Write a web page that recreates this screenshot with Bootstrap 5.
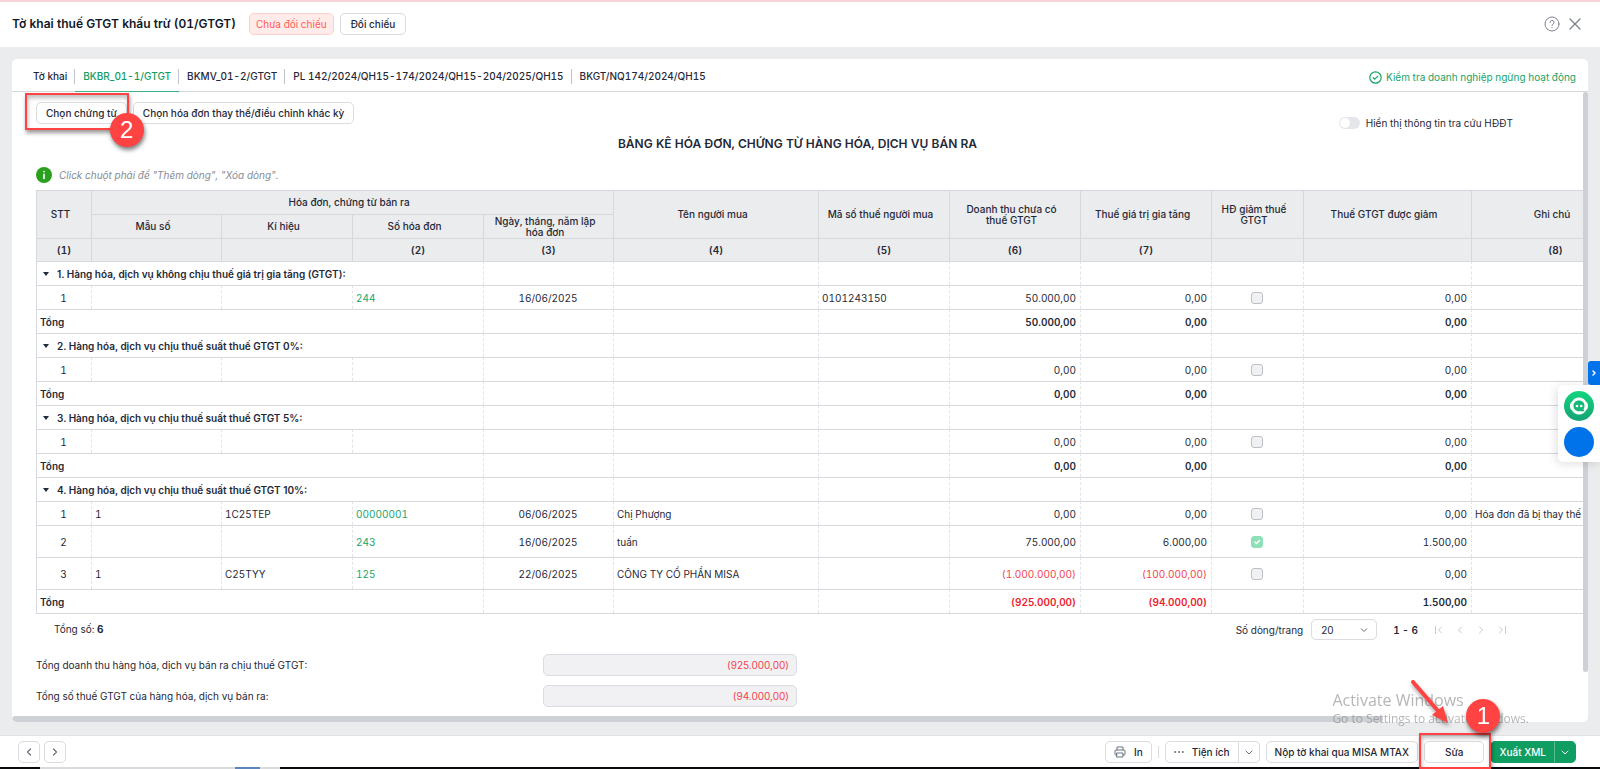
<!DOCTYPE html>
<html lang="vi">
<head>
<meta charset="utf-8">
<meta name="viewport" content="width=device-width, initial-scale=1">
<title>Tờ khai thuế GTGT khấu trừ (01/GTGT)</title>
<link rel="stylesheet" href="https://cdn.jsdelivr.net/npm/bootstrap@5.3.0/dist/css/bootstrap.min.css">
<style>
  :root { --ink: #1f2937; --line: #d5d8dc; --surface: #ebecee; --brand: #0f9d62; --mark-red: #ff4343; }
  body { font-family: Inter, "Noto Sans", sans-serif; font-size: 10px; line-height: 16px; font-variant-numeric: tabular-nums; color: var(--ink); background: var(--surface); }
  svg { display: block; fill: none; stroke: currentColor; stroke-linecap: round; stroke-linejoin: round; flex: none; }
  a { text-decoration: none; }

  .app-header { border-top: 2px solid #f5d3d8; height: 47px; padding: 0 18px 1px 12px; }
  .app-title { font-size: 12px; line-height: 20px; font-weight: 600; color: #111827; margin: 0 13px 0 0; }
  .btn-app { --bs-btn-font-size: 10px; --bs-btn-line-height: 16px; --bs-btn-padding-y: 2px; --bs-btn-padding-x: 9px;
    --bs-btn-border-radius: 5px; --bs-btn-font-weight: 500; --bs-btn-color: var(--ink); --bs-btn-bg: #fff;
    --bs-btn-border-color: #d9dce0; --bs-btn-hover-bg: #f5f6f7; --bs-btn-hover-border-color: #c8ccd2; white-space: nowrap; }
  .btn-wide { --bs-btn-padding-x: 10px; }
  .btn-brand { --bs-btn-color: #fff; --bs-btn-bg: var(--brand); --bs-btn-border-color: var(--brand);
    --bs-btn-hover-color: #fff; --bs-btn-hover-bg: #0c8a55; --bs-btn-hover-border-color: #0c8a55; }
  .btn-brand + .btn-brand { border-left-color: #5bbd93; }
  .btn-square { --bs-btn-padding-x: 0; width: 22px; height: 22px; color: #6b7280; }
  .btn-plain { border: 0; background: none; padding: 0; color: #7b818c; }
  .state-tag { line-height: 16px; padding: 2px 6px; margin-right: 6px; color: #ff5c52; background: #ffecea; border: 1px solid #fdcfcb; border-radius: 5px; }

  .workspace { padding: 12px 12px 13px; }
  .sheet { background: #fff; border-radius: 5px; overflow: hidden; }
  .tab-bar { height: 33px; border-bottom: 1px solid var(--line); padding: 0 12px 0 13px; }
  .tab-bar .nav-link { padding: 0 8px; height: 33px; line-height: 34px; font-weight: 500; color: var(--ink); position: relative; }
  .tab-bar .nav-link.active { color: var(--brand); box-shadow: inset 0 -1px 0 #3cb487; }
  .tab-bar .nav-item + .nav-item .nav-link::before { content: ""; position: absolute; left: -1px; top: 10px; width: 1px; height: 15px; background: #bfc4cb; }
  .check-link { color: #18a369; padding-top: 10px; }

  .sheet-body { padding: 0 0 9px 24px; min-width: 0; overflow: hidden; }
  .toolbar { height: 40px; padding-top: 10px; gap: 6px; }
  .lookup { margin: 12px 70px 0 0; gap: 6px; line-height: 18px; }
  .lookup .form-check-input { width: 21px; height: 12px; margin: 0; border: 0; background-color: #e4e6e9;
    background-image: url("data:image/svg+xml,%3csvg xmlns='http://www.w3.org/2000/svg' viewBox='-4 -4 8 8'%3e%3ccircle r='3.3' fill='%23fff'/%3e%3c/svg%3e"); }
  .form-title { font-size: 12px; line-height: 24px; font-weight: 600; }
  .hint { height: 18px; margin: 10px 0 6px; gap: 7px; color: #868b94; font-style: italic; }

  .grid-view { overflow: hidden; }
  .ledger { width: 1603px; table-layout: fixed; border-collapse: separate; border-spacing: 0; border-bottom: 1px solid var(--line); }
  .ledger th, .ledger td { height: 24px; padding: 0 4px 0 3px; border: 0 solid var(--line); border-top-width: 1px; border-left-width: 1px;
    line-height: 16px; white-space: nowrap; overflow: hidden; vertical-align: middle; }
  .ledger thead th { background: var(--surface); font-weight: 500; text-align: center; white-space: normal; line-height: 11px; padding: 0 8px 0 1px; }
  .ledger thead .col-index th { height: 23px; padding: 0; font-weight: 600; }
  .ledger tbody td, .ledger tbody th { border-left-style: dashed; border-left-color: #e2e4e7; }
  .ledger tbody tr > :first-child { border-left: 1px solid var(--line); }
  .ledger .group-row th, .ledger .sum-row th, .ledger .sum-row td { font-weight: 600; }
  .ledger .tall-row td { height: 32px; }
  .ledger .group-row button { border: 0; background: none; padding: 0; font-weight: 600; color: inherit; gap: 7px; margin-left: 2px; }
  .ledger .form-check-input { width: 12px; height: 12px; margin: 0; border-radius: 3px; vertical-align: -2px; border-color: #bcc0c5; background-color: #f0f1f2; opacity: 1; }
  .ledger .form-check-input:checked { background-color: #8fe0b8; border-color: #8fe0b8; }
  .ledger a { color: #1aa56c; }
  .minus { color: #f04450; }
  .sum-row .minus { color: #ee1c2b; }

  .pager { padding: 5px 76px 0 18px; height: 40px; }
  .pager-count { padding-top: 2px; }
  .page-size { width: 66px; height: 21px; font-size: 10px; line-height: 16px; padding: 1px 24px 1px 9px; border-radius: 5px; border-color: #d9dce0; color: var(--ink);
    background-image: url("data:image/svg+xml,%3csvg xmlns='http://www.w3.org/2000/svg' viewBox='0 0 10 10'%3e%3cpath d='M2 3.5l3 3 3-3' fill='none' stroke='%236b7280'/%3e%3c/svg%3e"); background-size: 10px 10px; background-position: right 7px center; }
  .pager-icons { color: #c6c9ce; gap: 11px; }
  .pager-icons button { color: inherit; }
  .sum-field { gap: 8px; margin-bottom: 9px; }
  .sum-field:last-child { margin-bottom: 0; }
  .sum-field label { width: 499px; }
  .sum-field .form-control { width: 254px; height: 22px; padding: 0 7px; font-size: 10px; line-height: 16px; text-align: right; border-radius: 5px; border-color: #d9dce0; background: #f1f1f3; color: #f04450; }
  .track-y { width: 5px; flex: none; }
  .track-x { height: 6px; }
  .thumb { background: #cdd0d4; border-radius: 3px; }

  .app-footer { background: #fff; border-top: 1px solid #e0e2e4; height: 32px; padding: 0 24px 0 18px; }
  .action-bar { gap: 6px; }
  .action-bar .btn-app:not(.btn-square) { --bs-btn-padding-x: 8px; }
  .rule-y { width: 1px; height: 12px; background: #d9dce0; }
  .desk-strip { height: 2px; background: linear-gradient(90deg, #0a0a0c 40px, #d9dadc 40px 235px, #5b86bd 235px 260px, #d9dadc 260px 280px, #0a0a0c 280px); }
  .icon-muted { color: #6b7280; }
  .icon-dots { fill: currentColor; stroke: none; }

  /* numbered guide marks */
  .mark-box { position: absolute; border: 2px solid var(--mark-red); box-shadow: 1px 3px 4px rgba(0,0,0,.4), inset 1px 3px 4px rgba(0,0,0,.25); pointer-events: none; z-index: 3; }
  .mark-dot { position: absolute; width: 34px; height: 34px; border-radius: 50%; background: var(--mark-red); color: #fff; font: 24px/34px "Liberation Sans", sans-serif; text-align: center; box-shadow: 1px 3px 4px rgba(0,0,0,.5); z-index: 4; }
  .mark-pick { inset: -9px -2px -6px -11px; }
  .dot-pick { right: -17px; top: 11px; }
  .mark-edit { inset: -8px -7px -6px -5px; }
  .dot-edit { right: -16px; bottom: 30px; }
  .arrow-edit { position: absolute; right: 34px; bottom: 38px; z-index: 4; filter: drop-shadow(1px 3px 2px rgba(0,0,0,.4)); }

  .os-note { position: fixed; right: 71px; bottom: 41px; color: rgba(120,122,126,.55); font-family: "Open Sans", sans-serif; pointer-events: none; white-space: nowrap; }
  .os-note p { margin: 0; font-size: 12px; line-height: 18px; }
  .os-note .os-note-title { font-size: 16px; line-height: 20px; }
  .side-dock { position: fixed; right: 0; top: 361px; z-index: 5; }
  .dock-toggle { width: 12px; height: 24px; border: 0; padding: 0; background: #0073ea; color: #fff; border-radius: 3px 0 0 3px; }
  .dock-panel { background: #fff; border-radius: 5px 0 0 5px; padding: 6px 6px 5px; gap: 6px; box-shadow: -2px 2px 10px rgba(0,0,0,.12); }
  .dock-panel button { width: 30px; height: 30px; border: 0; padding: 0; border-radius: 50%; }
  .dock-chat { background: linear-gradient(#12d67d, #14a373); }
  .dock-chat svg { stroke: none; }
  .dock-blue { background: #0073ea; }
</style>
</head>
<body>
<div class="min-vh-100 d-flex flex-column">

  <header class="app-header bg-white d-flex align-items-center">
    <h1 class="app-title">Tờ khai thuế GTGT khấu trừ (01/GTGT)</h1>
    <span class="state-tag">Chưa đối chiếu</span>
    <button type="button" class="btn btn-app btn-wide">Đối chiếu</button>
    <button type="button" class="btn-plain ms-auto me-2" aria-label="Trợ giúp">
      <svg width="16" height="16" viewBox="0 0 16 16"><circle cx="8" cy="8" r="7"/><path d="M6 6.4a2 2 0 1 1 2.9 1.8c-.6.3-.9.7-.9 1.3M8 11.6v.1"/></svg>
    </button>
    <button type="button" class="btn-plain" aria-label="Đóng">
      <svg width="14" height="14" viewBox="0 0 14 14" stroke-width="1.3"><path d="M2 2l10 10M12 2L2 12"/></svg>
    </button>
  </header>

  <main class="workspace flex-grow-1">
    <section class="sheet">
      <div class="tab-bar d-flex justify-content-between align-items-start">
        <ul class="nav flex-nowrap">
          <li class="nav-item"><a class="nav-link" href="#">Tờ khai</a></li>
          <li class="nav-item"><a class="nav-link active" aria-current="page" href="#">BKBR_01-1/GTGT</a></li>
          <li class="nav-item"><a class="nav-link" href="#">BKMV_01-2/GTGT</a></li>
          <li class="nav-item"><a class="nav-link" href="#">PL 142/2024/QH15-174/2024/QH15-204/2025/QH15</a></li>
          <li class="nav-item"><a class="nav-link" href="#">BKGT/NQ174/2024/QH15</a></li>
        </ul>
        <a class="check-link d-flex align-items-center gap-1" href="#">
          <svg width="13" height="13" viewBox="0 0 13 13" stroke-width="1.2"><circle cx="6.5" cy="6.5" r="5.7"/><path d="M4.2 6.7l1.6 1.5 3-3.1"/></svg>
          Kiểm tra doanh nghiệp ngừng hoạt động
        </a>
      </div>

      <div class="d-flex">
        <div class="sheet-body flex-grow-1">
          <div class="toolbar d-flex align-items-start">
            <div class="position-relative">
              <button type="button" class="btn btn-app">Chọn chứng từ</button>
              <span class="mark-box mark-pick"></span>
              <span class="mark-dot dot-pick">2</span>
            </div>
            <button type="button" class="btn btn-app">Chọn hóa đơn thay thế/điều chỉnh khác kỳ</button>
            <div class="lookup form-switch d-flex align-items-center ms-auto p-0">
              <input class="form-check-input" type="checkbox" role="switch" id="lookup">
              <label for="lookup">Hiển thị thông tin tra cứu HĐĐT</label>
            </div>
          </div>
          <h2 class="form-title text-center mb-0 pe-4">BẢNG KÊ HÓA ĐƠN, CHỨNG TỪ HÀNG HÓA, DỊCH VỤ BÁN RA</h2>
          <div class="hint d-flex align-items-center">
            <svg width="16" height="16" viewBox="0 0 16 16"><circle cx="8" cy="8" r="8" fill="#2ba01f" stroke="none"/><path d="M8 7.4v4M8 4.6v.1" stroke="#fff" stroke-width="1.6"/></svg>
            Click chuột phải để "Thêm dòng", "Xóa dòng".
          </div>

          <div class="grid-view">
            <table class="ledger">
              <colgroup>
                <col style="width:55px"><col style="width:130px"><col style="width:131px"><col style="width:131px"><col style="width:130px"><col style="width:205px"><col style="width:131px"><col style="width:131px"><col style="width:131px"><col style="width:92px"><col style="width:168px"><col style="width:168px">
              </colgroup>
              <thead>
                <tr><th rowspan="2">STT</th><th colspan="4">Hóa đơn, chứng từ bán ra</th><th rowspan="2">Tên người mua</th><th rowspan="2">Mã số thuế người mua</th><th rowspan="2">Doanh thu chưa có<br>thuế GTGT</th><th rowspan="2">Thuế giá trị gia tăng</th><th rowspan="2">HĐ giảm thuế<br>GTGT</th><th rowspan="2">Thuế GTGT được giảm</th><th rowspan="2">Ghi chú</th></tr>
                <tr><th>Mẫu số</th><th>Kí hiệu</th><th>Số hóa đơn</th><th>Ngày, tháng, năm lập<br>hóa đơn</th></tr>
                <tr class="col-index"><th>(1)</th><th></th><th></th><th>(2)</th><th>(3)</th><th>(4)</th><th>(5)</th><th>(6)</th><th>(7)</th><th></th><th></th><th>(8)</th></tr>
              </thead>
              <tbody>
                <tr class="group-row"><th colspan="4"><button type="button" class="d-flex align-items-center"><svg width="8" height="6" viewBox="0 0 8 6"><path d="M1 1h6L4 5z" fill="currentColor" stroke="none"/></svg>1. Hàng hóa, dịch vụ không chịu thuế giá trị gia tăng (GTGT):</button></th><td></td><td></td><td></td><td></td><td></td><td></td><td></td><td></td></tr>
                <tr><td class="text-center">1</td><td></td><td></td><td><a href="#">244</a></td><td class="text-center">16/06/2025</td><td></td><td>0101243150</td><td class="text-end">50.000,00</td><td class="text-end">0,00</td><td class="text-center"><input class="form-check-input" type="checkbox" disabled aria-label="HĐ giảm thuế GTGT"></td><td class="text-end">0,00</td><td></td></tr>
                <tr class="sum-row"><th colspan="4">Tổng</th><td></td><td></td><td></td><td class="text-end">50.000,00</td><td class="text-end">0,00</td><td></td><td class="text-end">0,00</td><td></td></tr>

                <tr class="group-row"><th colspan="4"><button type="button" class="d-flex align-items-center"><svg width="8" height="6" viewBox="0 0 8 6"><path d="M1 1h6L4 5z" fill="currentColor" stroke="none"/></svg>2. Hàng hóa, dịch vụ chịu thuế suất thuế GTGT 0%:</button></th><td></td><td></td><td></td><td></td><td></td><td></td><td></td><td></td></tr>
                <tr><td class="text-center">1</td><td></td><td></td><td></td><td></td><td></td><td></td><td class="text-end">0,00</td><td class="text-end">0,00</td><td class="text-center"><input class="form-check-input" type="checkbox" disabled aria-label="HĐ giảm thuế GTGT"></td><td class="text-end">0,00</td><td></td></tr>
                <tr class="sum-row"><th colspan="4">Tổng</th><td></td><td></td><td></td><td class="text-end">0,00</td><td class="text-end">0,00</td><td></td><td class="text-end">0,00</td><td></td></tr>

                <tr class="group-row"><th colspan="4"><button type="button" class="d-flex align-items-center"><svg width="8" height="6" viewBox="0 0 8 6"><path d="M1 1h6L4 5z" fill="currentColor" stroke="none"/></svg>3. Hàng hóa, dịch vụ chịu thuế suất thuế GTGT 5%:</button></th><td></td><td></td><td></td><td></td><td></td><td></td><td></td><td></td></tr>
                <tr><td class="text-center">1</td><td></td><td></td><td></td><td></td><td></td><td></td><td class="text-end">0,00</td><td class="text-end">0,00</td><td class="text-center"><input class="form-check-input" type="checkbox" disabled aria-label="HĐ giảm thuế GTGT"></td><td class="text-end">0,00</td><td></td></tr>
                <tr class="sum-row"><th colspan="4">Tổng</th><td></td><td></td><td></td><td class="text-end">0,00</td><td class="text-end">0,00</td><td></td><td class="text-end">0,00</td><td></td></tr>

                <tr class="group-row"><th colspan="4"><button type="button" class="d-flex align-items-center"><svg width="8" height="6" viewBox="0 0 8 6"><path d="M1 1h6L4 5z" fill="currentColor" stroke="none"/></svg>4. Hàng hóa, dịch vụ chịu thuế suất thuế GTGT 10%:</button></th><td></td><td></td><td></td><td></td><td></td><td></td><td></td><td></td></tr>
                <tr><td class="text-center">1</td><td>1</td><td>1C25TEP</td><td><a href="#">00000001</a></td><td class="text-center">06/06/2025</td><td>Chị Phượng</td><td></td><td class="text-end">0,00</td><td class="text-end">0,00</td><td class="text-center"><input class="form-check-input" type="checkbox" disabled aria-label="HĐ giảm thuế GTGT"></td><td class="text-end">0,00</td><td>Hóa đơn đã bị thay thế</td></tr>
                <tr class="tall-row"><td class="text-center">2</td><td></td><td></td><td><a href="#">243</a></td><td class="text-center">16/06/2025</td><td>tuấn</td><td></td><td class="text-end">75.000,00</td><td class="text-end">6.000,00</td><td class="text-center"><input class="form-check-input" type="checkbox" checked disabled aria-label="HĐ giảm thuế GTGT"></td><td class="text-end">1.500,00</td><td></td></tr>
                <tr class="tall-row"><td class="text-center">3</td><td>1</td><td>C25TYY</td><td><a href="#">125</a></td><td class="text-center">22/06/2025</td><td>CÔNG TY CỔ PHẦN MISA</td><td></td><td class="text-end minus">(1.000.000,00)</td><td class="text-end minus">(100.000,00)</td><td class="text-center"><input class="form-check-input" type="checkbox" disabled aria-label="HĐ giảm thuế GTGT"></td><td class="text-end">0,00</td><td></td></tr>
                <tr class="sum-row"><th colspan="4">Tổng</th><td></td><td></td><td></td><td class="text-end minus">(925.000,00)</td><td class="text-end minus">(94.000,00)</td><td></td><td class="text-end">1.500,00</td><td></td></tr>
              </tbody>
            </table>
          </div>

          <div class="pager d-flex align-items-start justify-content-between">
            <div class="pager-count">Tổng số: <strong>6</strong></div>
            <div class="d-flex align-items-center">
              <label for="page-size" class="me-2">Số dòng/trang</label>
              <select id="page-size" class="form-select page-size"><option>20</option><option>50</option></select>
              <strong class="mx-3 fw-semibold">1 - 6</strong>
              <div class="pager-icons d-flex">
                <button type="button" class="btn-plain" aria-label="Trang đầu"><svg width="10" height="10" viewBox="0 0 10 10"><path d="M1.500 1.500v7M7.500 2l-3 3 3 3"/></svg></button>
                <button type="button" class="btn-plain" aria-label="Trang trước"><svg width="10" height="10" viewBox="0 0 10 10"><path d="M6.500 2l-3 3 3 3"/></svg></button>
                <button type="button" class="btn-plain" aria-label="Trang sau"><svg width="10" height="10" viewBox="0 0 10 10"><path d="M3.500 2l3 3-3 3"/></svg></button>
                <button type="button" class="btn-plain" aria-label="Trang cuối"><svg width="10" height="10" viewBox="0 0 10 10"><path d="M8.500 1.500v7M2.500 2l3 3-3 3"/></svg></button>
              </div>
            </div>
          </div>

          <div>
            <div class="sum-field d-flex align-items-center">
              <label for="sum-revenue">Tổng doanh thu hàng hóa, dịch vụ bán ra chịu thuế GTGT:</label>
              <input id="sum-revenue" class="form-control" type="text" value="(925.000,00)" readonly>
            </div>
            <div class="sum-field d-flex align-items-center">
              <label for="sum-tax">Tổng số thuế GTGT của hàng hóa, dịch vụ bán ra:</label>
              <input id="sum-tax" class="form-control" type="text" value="(94.000,00)" readonly>
            </div>
          </div>
        </div>
        <div class="track-y"><div class="thumb" style="height:93%"></div></div>
      </div>
      <div class="track-x"><div class="thumb h-100" style="width:87%"></div></div>
    </section>
  </main>

  <footer>
    <div class="app-footer d-flex align-items-center">
      <button type="button" class="btn btn-app btn-square d-flex align-items-center justify-content-center me-1" aria-label="Trước"><svg width="10" height="10" viewBox="0 0 10 10" stroke-width="1.3"><path d="M6.500 2l-3 3 3 3"/></svg></button>
      <button type="button" class="btn btn-app btn-square d-flex align-items-center justify-content-center" aria-label="Sau"><svg width="10" height="10" viewBox="0 0 10 10" stroke-width="1.3"><path d="M3.500 2l3 3-3 3"/></svg></button>

      <div class="action-bar d-flex align-items-center ms-auto">
        <button type="button" class="btn btn-app d-flex align-items-center gap-2">
          <svg class="icon-muted" width="12" height="12" viewBox="0 0 12 12"><path d="M3 4V1h6v3M3 9H1.700a.7.7 0 0 1-.7-.7V5a1 1 0 0 1 1-1h8a1 1 0 0 1 1 1v3.300a.7.7 0 0 1-.7.7H9M3 7h6v4H3z"/></svg>
          In
        </button>
        <span class="rule-y"></span>
        <div class="btn-group">
          <button type="button" class="btn btn-app d-flex align-items-center gap-2">
            <svg class="icon-muted icon-dots" width="10" height="10" viewBox="0 0 10 10"><circle cx="1.200" cy="5" r="1"/><circle cx="5" cy="5" r="1"/><circle cx="8.800" cy="5" r="1"/></svg>
            Tiện ích
          </button>
          <button type="button" class="btn btn-app btn-square d-flex align-items-center justify-content-center" aria-label="Mở tiện ích"><svg width="10" height="10" viewBox="0 0 10 10"><path d="M2 4l3 3 3-3"/></svg></button>
        </div>
        <button type="button" class="btn btn-app">Nộp tờ khai qua MISA MTAX</button>
        <div class="position-relative">
          <button type="button" class="btn btn-app px-3"><span class="px-1">Sửa</span></button>
          <span class="mark-box mark-edit"></span>
          <svg class="arrow-edit" width="40" height="46" viewBox="0 0 40 46"><path d="M3 3L29 33" stroke="#ff4343" stroke-width="4"/><path d="M38 44L22 36L33 27Z" fill="#ff4343" stroke="none"/></svg>
          <span class="mark-dot dot-edit">1</span>
        </div>
        <div class="btn-group">
          <button type="button" class="btn btn-app btn-brand">Xuất XML</button>
          <button type="button" class="btn btn-app btn-brand btn-square d-flex align-items-center justify-content-center text-white" aria-label="Tùy chọn xuất"><svg width="10" height="10" viewBox="0 0 10 10"><path d="M2 4l3 3 3-3"/></svg></button>
        </div>
      </div>
    </div>
    <div class="desk-strip"></div>
  </footer>
</div>

<aside class="side-dock d-flex flex-column align-items-end">
  <button type="button" class="dock-toggle d-flex align-items-center justify-content-center" aria-label="Mở thanh bên"><svg width="8" height="8" viewBox="0 0 8 8" stroke-width="1.500"><path d="M3 2l2 2-2 2"/></svg></button>
  <div class="dock-panel d-flex flex-column">
    <button type="button" class="dock-chat" aria-label="Trợ lý">
      <svg width="30" height="30" viewBox="0 0 30 30"><path d="M15 6.500c3.500 0 6 2 7.200 4.500 1.200.6 1.800 2 1.800 4s-.6 3.400-1.800 4C21 21.500 18.500 23.500 15 23.500S9 21.500 7.800 19C6.600 18.400 6 17 6 15s.6-3.400 1.800-4C9 8.500 11.500 6.500 15 6.500z" fill="#fff"/><path d="M15 9.500c3.300 0 5.500 2.300 5.500 5.300 0 1.600-.5 2.700-1 3.500l1 2H15c-3.300 0-5.500-2.300-5.500-5.500s2.200-5.300 5.500-5.300z" fill="#14b877"/><circle cx="13" cy="15" r="1.300" fill="#fff"/><circle cx="17.300" cy="15" r="1.300" fill="#fff"/></svg>
    </button>
    <button type="button" class="dock-blue" aria-label="Hỗ trợ"></button>
  </div>
</aside>

<div class="os-note">
  <p class="os-note-title">Activate Windows</p>
  <p>Go to Settings to activate Windows.</p>
</div>
<script src="https://cdn.jsdelivr.net/npm/bootstrap@5.3.0/dist/js/bootstrap.bundle.min.js"></script>
</body>
</html>
